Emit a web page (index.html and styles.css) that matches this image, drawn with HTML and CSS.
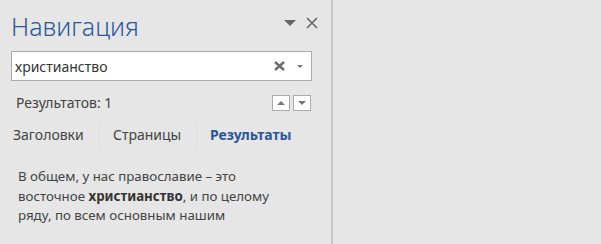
FILE: index.html
```html
<!DOCTYPE html>
<html lang="ru">
<head>
    <meta charset="UTF-8">
    <title>Навигация</title>
    <link rel="stylesheet" href="styles.css">
</head>
<body>
    <div class="pane">
        <div class="pane-head">
            <h1 class="pane-title">Навигация</h1>
            <div class="pane-tools">
                <svg class="tool-menu" width="12" height="7" viewBox="0 0 12 7"><path d="M0 0H12L6 6Z" fill="#666"/></svg>
                <svg class="tool-close" width="12" height="12" viewBox="0 0 12 12"><path d="M1 1L11 11M11 1L1 11" stroke="#666" stroke-width="1.6"/></svg>
            </div>
        </div>

        <div class="search">
            <span class="search-text">христианство</span>
            <svg class="search-clear" width="11" height="10" viewBox="0 0 11 10"><path d="M1 1L10 9M10 1L1 9" stroke="#6d6d6d" stroke-width="2.4"/></svg>
            <svg class="search-drop" width="6" height="3" viewBox="0 0 6 3"><path d="M0 0H6L3 3Z" fill="#777"/></svg>
        </div>

        <div class="results-bar">
            <span>Результатов: 1</span>
            <div class="step-buttons">
                <button class="step"><svg width="8" height="4" viewBox="0 0 8 4"><path d="M0 4H8L4 0Z" fill="#777"/></svg></button>
                <button class="step"><svg width="8" height="4" viewBox="0 0 8 4"><path d="M0 0H8L4 4Z" fill="#777"/></svg></button>
            </div>
        </div>

        <div class="tabs">
            <div class="tab tab-headings">Заголовки</div>
            <div class="tab tab-pages">Страницы</div>
            <div class="tab active">Результаты</div>
        </div>

        <p class="snippet">В общем, у нас православие – это<br>восточное <b>христианство</b>, и по целому<br>ряду, по всем основным нашим</p>
    </div>
</body>
</html>
```

FILE: styles.css
```css
body {
    margin: 0;
    background: #e6e6e6;
    font-family: "Noto Sans", "Open Sans", sans-serif;
    color: #444;
    height: 244px;
    overflow: hidden;
}

.pane {
    width: 331px;
    height: 244px;
    border-right: 2px solid #c8c8c8;
}

/* Header */
.pane-head {
    display: flex;
    justify-content: space-between;
    align-items: flex-start;
    padding: 8px 13px 0 11px;
    height: 43px;
}
.pane-title {
    margin: 0;
    font-weight: 300;
    font-size: 25px;
    line-height: 36px;
    color: #2b579a;
}
.pane-tools {
    display: flex;
    align-items: center;
    gap: 10px;
    padding-top: 9px;
}

/* Search box */
.search {
    display: flex;
    align-items: center;
    margin-left: 11px;
    width: 299px;
    height: 28px;
    background: #fff;
    border: 1px solid #ababab;
}
.search-text {
    flex: 1;
    padding-left: 3px;
    font-size: 14px;
    color: #333;
}
.search-clear {
    margin-right: 12px;
}
.search-drop {
    margin-right: 8px;
}

/* Results counter */
.results-bar {
    display: flex;
    justify-content: space-between;
    align-items: center;
    margin: 12px 20px 0 16px;
    font-size: 14px;
}
.step-buttons {
    display: flex;
    gap: 3px;
}
.step {
    display: flex;
    align-items: center;
    justify-content: center;
    width: 18px;
    height: 16px;
    padding: 0;
    background: #fff;
    border: 1px solid #ababab;
}

/* Tabs */
.tabs {
    display: flex;
    margin: 11px 0 0 0;
    font-size: 14px;
}
.tab {
    padding: 2px 0 2px 13px;
    line-height: 20px;
    border-right: 1px solid #dcdcdc;
}
.tab-headings {
    width: 86px;
}
.tab-pages {
    width: 83px;
}
.tab.active {
    border-right: none;
    font-weight: 700;
    color: #2b579a;
}

/* Snippet */
.snippet {
    margin: 20px 0 0 18px;
    width: 310px;
    font-size: 13.3px;
    line-height: 19.5px;
}
.snippet b {
    color: #333;
}
```
